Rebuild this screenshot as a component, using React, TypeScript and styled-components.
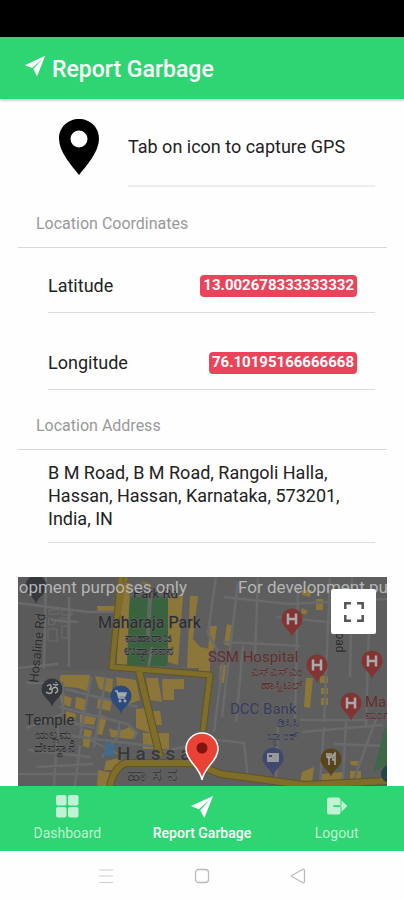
import React from "react";
import styled, { createGlobalStyle } from "styled-components";

const GlobalStyle = createGlobalStyle`
  * { box-sizing: border-box; }
  body {
    margin: 0;
    background: #fefefe;
    color: #222;
    font-family: Roboto, "Noto Sans", sans-serif;
    font-size: 18px;
  }
`;

const Screen = styled.div`
  display: flex;
  flex-direction: column;
  height: 100vh;
`;

const StatusBar = styled.div`
  flex: none;
  height: 37px;
  background: #000;
`;

const Header = styled.header`
  flex: none;
  display: flex;
  align-items: center;
  gap: 6px;
  height: 62px;
  padding: 4px 24px 0;
  background: #2fd572;
  color: #fff;
  box-shadow: 0 1px 3px rgba(0, 0, 0, 0.3);

  svg {
    margin-bottom: 8px;
  }
`;

const Title = styled.h1`
  margin: 0;
  font-size: 23px;
  line-height: 28px;
  font-weight: 500;
`;

const Content = styled.main`
  flex: 1;
  min-height: 0;
  display: flex;
  flex-direction: column;
  padding: 0 17px 0 18px;
  overflow: hidden;
`;

const Capture = styled.div`
  display: flex;
  padding-right: 12px;
  height: 88px;
`;

const CaptureButton = styled.button`
  display: flex;
  justify-content: center;
  width: 110px;
  padding: 20px 0 0 12px;
  border: 0;
  background: none;
  cursor: pointer;
`;

const CaptureLabel = styled.div`
  flex: 1;
  padding-top: 8px;
  line-height: 80px;
  border-bottom: 2px solid #ededed;
`;

const SectionTitle = styled.h2<{ $height: number }>`
  display: flex;
  align-items: flex-end;
  height: ${(p) => p.$height}px;
  margin: 0;
  padding: 0 18px 13px;
  border-bottom: 1px solid #d8d8d8;
  color: #999;
  font-size: 16px;
  line-height: 20px;
  font-weight: 400;
`;

const Row = styled.div<{ $height: number }>`
  display: flex;
  align-items: flex-end;
  justify-content: space-between;
  height: ${(p) => p.$height}px;
  margin: 0 12px 0 30px;
  padding: 0 18px 15px 0;
  border-bottom: 1px solid #dcdcdc;
  line-height: 22px;
`;

const Badge = styled.span`
  padding: 0 3px 2px;
  border-radius: 4px;
  background: #eb445a;
  color: #fff;
  font-size: 15px;
  line-height: 20px;
  font-weight: 700;
`;

const Address = styled.p`
  margin: 0 12px 0 30px;
  padding: 11px 24px 12px 0;
  border-bottom: 1px solid #dcdcdc;
  line-height: 23px;
`;

const MapPanel = styled.section`
  position: relative;
  flex: 1;
  min-height: 0;
  margin-top: 34px;
  overflow: hidden;
  background: #5e5e5e;
`;

const MapDrawing = styled.svg`
  display: block;
  width: 100%;
  height: 100%;
`;

const FullscreenButton = styled.button`
  position: absolute;
  top: 12px;
  right: 11px;
  display: grid;
  place-items: center;
  width: 45px;
  height: 45px;
  padding: 0;
  border: 0;
  border-radius: 2px;
  background: #fff;
  cursor: pointer;
`;

const Tabs = styled.nav`
  flex: none;
  display: grid;
  grid-template-columns: repeat(3, 1fr);
  height: 65px;
  background: #2fd572;
`;

const Tab = styled.a<{ $active?: boolean }>`
  display: flex;
  flex-direction: column;
  align-items: center;
  gap: 5px;
  padding-top: 9px;
  color: ${(p) => (p.$active ? "#fff" : "#bff3d3")};
  font-size: 14px;
  line-height: 18px;
  font-weight: ${(p) => (p.$active ? 500 : 400)};
  text-decoration: none;
  white-space: nowrap;
`;

const SystemBar = styled.div`
  flex: none;
  display: flex;
  justify-content: center;
  align-items: center;
  gap: 80px;
  height: 49px;
`;

const SystemButton = styled.button`
  display: grid;
  width: 16px;
  height: 16px;
  padding: 0;
  border: 0;
  background: none;
`;

const PlaneIcon = ({ size }: { size: number }) => (
  <svg width={size} height={size} viewBox="-1 -1 26 26" fill="currentColor" aria-hidden="true">
    <path d="M24 0 0 11l8.600 3.400L21 3.500 10 15.400 14.500 24Z" />
  </svg>
);

const GridIcon = () => (
  <svg width="24" height="24" viewBox="0 0 24 24" fill="currentColor" aria-hidden="true">
    <rect x="1" y="0" width="10.5" height="10.5" rx="2" />
    <rect x="13" y="0" width="10.5" height="10.5" rx="2" />
    <rect x="1" y="12" width="10.5" height="10.5" rx="2" />
    <rect x="13" y="12" width="10.5" height="10.5" rx="2" />
  </svg>
);

const LogoutIcon = () => (
  <svg width="24" height="24" viewBox="0 0 24 24" aria-hidden="true">
    <path
      fill="currentColor"
      d="M4.500 2.500H13A2.500 2.500 0 0 1 15.500 5V10.300H8.300V11.900H15.500V17A2.500 2.500 0 0 1 13 19.500H4.500A2.500 2.500 0 0 1 2 17V5A2.500 2.500 0 0 1 4.500 2.500Z"
    />
    <path fill="currentColor" d="M16.500 5.500 22.300 11.100 16.500 16.700V11.900H15.500V10.300H16.500Z" />
  </svg>
);

type PinKind = "hospital" | "temple" | "shop" | "bank" | "food" | "plain";

const pinColors: Record<PinKind, string> = {
  hospital: "#813532",
  temple: "#34383d",
  shop: "#2b4a80",
  bank: "#41486f",
  food: "#58451c",
  plain: "#34383d",
};

const Pin = ({ x, y, kind }: { x: number; y: number; kind: PinKind }) => (
  <g transform={`translate(${x} ${y})`}>
    <path
      d="M0 18C-1.500 11-10.500 8-10.500 0A10.500 10.500 0 0 1 10.500 0C10.500 8 1.500 11 0 18Z"
      fill={pinColors[kind]}
    />
    {kind === "hospital" && (
      <path d="M-4-5.500V5.500M4-5.500V5.500M-4 0H4" stroke="#aaa" strokeWidth="2.500" fill="none" />
    )}
    {kind === "temple" && (
      <path
        d="M-5-3Q-1-6-1-2.500-1 0-3 0 1 0 0 3-2 6-6 3M0 0Q3-3 5-1 7 3 3 4M1-5Q4-3 6-5M4-7V-6"
        stroke="#aaa"
        strokeWidth="1.400"
        fill="none"
      />
    )}
    {kind === "shop" && (
      <g fill="none" stroke="#aaa" strokeWidth="1.500">
        <path d="M-6-5H-4L-2 2H4" />
        <path d="M-3-3H5L4 0H-2Z" fill="#aaa" />
        <circle cx="-1" cy="5" r=".7" />
        <circle cx="4" cy="5" r=".7" />
      </g>
    )}
    {kind === "bank" && (
      <g fill="#999">
        <rect x="-6" y="-5" width="12" height="9" rx="1" />
        <path d="M-4-3H-1V-1H-4Z" fill="#41486f" />
      </g>
    )}
    {kind === "food" && (
      <path
        d="M-4-6V-2Q-2 0 0-2V-6M-2-6V6M4 6V-6Q1-4 2 1H4"
        stroke="#aaa"
        strokeWidth="1.500"
        fill="none"
      />
    )}
  </g>
);

const blocks = [
  "M100 6H112L109 89 99 90Z",
  "M79 29H98L97 36H80Z",
  "M150 18H165L160 88 150 85Z",
  "M172 19H180L175 62 182 70 192 72V91H169Z",
  "M42 99H54L53 103 42 104Z",
  "M43 98H72L69 114 60 111 43 109Z",
  "M42 117 54 121 52 130 43 126Z",
  "M58 120 70 123 67 134 57 131Z",
  "M48 134 58 137 57 145 46 142Z",
  "M62 137 78 141 76 148 62 146Z",
  "M77 99 95 102 94 116 81 112Z",
  "M80 122 94 124 92 134 79 131Z",
  "M66 152 74 154 71 171 65 169Z",
  "M82 138 89 140 84 158 78 157Z",
  "M91 151Q100 157 113 149L119 155 114 162 93 160Z",
  "M98 100 118 103 122 123 108 128 100 119Z",
  "M128 101H140L144 125 132 123Z",
  "M118 132 127 131 133 156 118 151Z",
  "M144 102H166V112H156V123H145Z",
  "M134 134 142 134 144 148 137 148Z",
  "M125 156H151V172H125Z",
  "M88 184 105 180 97 193 86 193Z",
  "M80 193 94 196 90 209H79Z",
  "M192 49 199 49 195 76 190 75Z",
  "M209 47 215 49 211 69 206 67Z",
  "M181 87H192V99H181Z",
  "M202 88 208 88 206 106 201 105Z",
  "M284 13 294 13 292 20 284 18Z",
  "M298 22H305V33H298Z",
  "M284 31 290 34 287 38 283 36Z",
  "M288 101H295L292 131 286 130Z",
  "M302 99H310V106H302ZM303 111H310V117H303ZM303 121H310V128H303Z",
  "M284 195 296 190 294 206H282Z",
  "M304 197 324 195 326 204H304Z",
  "M332 184 341 184 339 189 333 188ZM332 194 343 194 343 202 332 202Z",
];

const minorRoads =
  "M0 26 70 35 96 35M28 0 26 92M51 20 51 90M0 91 40 87M33 43 60 45M8 106H45V137L8 151M47 112 120 130M41 130 110 147M73 100 62 160M88 100 76 170M50 145 77 151M39 157 140 170M101 146V158L84 180M72 163 100 177M110 147 119 156 115 162M143 175 185 166M134 70 130 92M198 0 190 56 205 84 196 155M220 5 211 80 204 140M240 0 237 80M258 40 340 48M280 8 277 145M312 0 306 145M334 0 332 100M351 42 348 150M205 65 282 69M225 69 218 145M190 162 226 166 230 202M260 150 258 205M282 143H350M284 155 365 148M306 150 302 205M316 167 369 169M328 145 325 202M358 142 335 205M206 20 270 27 369 22M10 173 72 180M18 190 75 187M62 168 57 209M40 149 36 209M0 197H80";

const MapScene = () => (
  <MapDrawing viewBox="0 0 369 209" preserveAspectRatio="xMidYMin slice" role="img" aria-label="Map of Hassan">
    <rect width="369" height="209" fill="#5e5e5e" />
    <path d="M0 0H98L92 93H0Z" fill="#5a5a5a" />
    <path d="M113 20H155L149 89 99 88Z" fill="#39633f" />
    <path d="M132 20 130 60" stroke="#606960" strokeWidth="4" />
    <path d={blocks.join("")} fill="#8c763a" />
    <path d={minorRoads} fill="none" stroke="#696a6c" strokeWidth="2.500" />
    <path d="M31 33H41V37H31ZM44 33H54V38H44ZM31 41 38 43 36 48 30 47ZM42 41H52V45H42ZM30 52H39V64H30ZM44 49H50V61H44Z" fill="none" stroke="#6d6d6d" />
    <path d="M88 166 97 167 95 179 86 178Z" fill="#406b8b" />
    <path d="M366 153 369 151V188L356 194Z" fill="#3d6747" />
    <g fill="none" strokeLinejoin="round">
      <path d="M103 0 94 90 192 98 185 154" stroke="#5f5424" strokeWidth="7" />
      <path d="M121 94 142 180M92 209Q96 190 108 186H174L203 197 286 208 369 204" stroke="#5f5424" strokeWidth="8" />
      <path d="M103 0 94 90 192 98 185 154" stroke="#7f6e2a" strokeWidth="5" />
      <path d="M121 94 142 180M92 209Q96 190 108 186H174L203 197 286 208 369 204" stroke="#7f6e2a" strokeWidth="6" />
      <path d="M108 0 101 38M124 5 133 9" stroke="#7f6e2a" strokeWidth="3" />
    </g>
    <g fontFamily='Roboto, "Noto Sans", sans-serif' fill="#292b2d" stroke="#666" strokeWidth="1" paintOrder="stroke">
      <text x="115" y="21" fontSize="13">Park Rd</text>
      <text x="80" y="51" fontSize="16">Maharaja Park</text>
      <g textAnchor="middle" fontSize="13">
        <text x="130" y="65">ಮಹಾರಾಜ</text>
        <text x="130" y="78">ಉದ್ಯಾನವನ</text>
        <text x="36" y="162">ಯಲ್ಲಮ್ಮ</text>
        <text x="36" y="175">ದೇವಸ್ಥಾನ</text>
      </g>
      <text x="7" y="148" fontSize="15">Temple</text>
      <text transform="translate(20 106) rotate(-84)" fontSize="13">Hosaline Rd</text>
      <text transform="translate(318 48) rotate(90)" fontSize="12">Road</text>
      <g fill="#38383a" fontWeight="500">
        <text x="99" y="183" fontSize="19" letterSpacing="5">Hassan</text>
        <text x="109" y="204" fontSize="19" letterSpacing="5">ಹಾಸನ</text>
      </g>
      <g fill="#612d2b">
        <text x="190" y="85" fontSize="15">SSM Hospital</text>
        <g textAnchor="end" fontSize="13">
          <text x="285" y="99">ಎಸ್‌ಎಸ್‌ಎಂ</text>
          <text x="285" y="112">ಹಾಸ್ಪಿಟಲ್</text>
        </g>
        <text x="347" y="130" fontSize="15">Mangala</text>
        <text x="347" y="142" fontSize="13">ಮಂಗಳ</text>
      </g>
      <g fill="#343a5c">
        <text x="212" y="137" fontSize="15">DCC Bank</text>
        <g textAnchor="end" fontSize="13">
          <text x="281" y="150">ಡಿಸಿಸಿ</text>
          <text x="281" y="163">ಬ್ಯಾಂಕ್</text>
        </g>
      </g>
    </g>
    <Pin x={18} y={9} kind="plain" />
    <Pin x={34} y={112} kind="temple" />
    <Pin x={103} y={119} kind="shop" />
    <Pin x={274} y={42} kind="hospital" />
    <Pin x={299} y={88} kind="hospital" />
    <Pin x={354} y={84} kind="hospital" />
    <Pin x={333} y={126} kind="hospital" />
    <Pin x={255} y={181} kind="bank" />
    <Pin x={313} y={182} kind="food" />
    <circle cx="372" cy="197" r="9" fill="#234749" />
    <g fontFamily="Roboto, sans-serif" fontSize="17" fill="#b5b5b5">
      <text x="169" y="16" textAnchor="end">For development purposes only</text>
      <text x="220" y="16">For development purposes only</text>
    </g>
    <path
      d="M184 203C182 190 168 184 168 172A16 16 0 0 1 200 172C200 184 186 190 184 203Z"
      fill="#ea4335"
      stroke="#fff"
      strokeWidth="1.500"
    />
    <circle cx="184" cy="171" r="5.500" fill="#811411" />
  </MapDrawing>
);

export default function App() {
  return (
    <>
      <GlobalStyle />
      <Screen>
        <StatusBar />
        <Header>
          <PlaneIcon size={22} />
          <Title>Report Garbage</Title>
        </Header>
        <Content>
          <Capture>
            <CaptureButton aria-label="Capture GPS">
              <svg width="40" height="56" viewBox="0 0 40 56" aria-hidden="true">
                <path
                  fillRule="evenodd"
                  d="M20 0C9 0 0 8 0 19.500 0 33 12 46 20 56 28 46 40 33 40 19.500 40 8 31 0 20 0Zm0 11.500a8.500 8.500 0 1 1 0 17 8.500 8.500 0 0 1 0-17Z"
                />
              </svg>
            </CaptureButton>
            <CaptureLabel>Tab on icon to capture GPS</CaptureLabel>
          </Capture>
          <SectionTitle $height={61}>Location Coordinates</SectionTitle>
          <Row $height={65}>
            <span>Latitude</span>
            <Badge>13.002678333333332</Badge>
          </Row>
          <Row $height={77}>
            <span>Longitude</span>
            <Badge>76.10195166666668</Badge>
          </Row>
          <SectionTitle $height={60}>Location Address</SectionTitle>
          <Address>B M Road, B M Road, Rangoli Halla, Hassan, Hassan, Karnataka, 573201, India, IN</Address>
          <MapPanel>
            <MapScene />
            <FullscreenButton aria-label="Toggle fullscreen view">
              <svg width="20" height="20" viewBox="0 0 20 20" fill="none" stroke="#555" strokeWidth="2.500" aria-hidden="true">
                <path d="M1.300 7V1.300H7M13 1.300H18.700V7M18.700 13V18.700H13M7 18.700H1.300V13" />
              </svg>
            </FullscreenButton>
          </MapPanel>
        </Content>
        <Tabs>
          <Tab href="#dashboard">
            <GridIcon />
            Dashboard
          </Tab>
          <Tab href="#report" $active aria-current="page">
            <PlaneIcon size={24} />
            Report Garbage
          </Tab>
          <Tab href="#logout">
            <LogoutIcon />
            Logout
          </Tab>
        </Tabs>
        <SystemBar>
          <SystemButton aria-label="Recent apps">
            <svg width="16" height="16" viewBox="0 0 16 16" stroke="#ccc" strokeWidth="1.200">
              <path d="M1 2H15M1 8H15M1 14.500H15" />
            </svg>
          </SystemButton>
          <SystemButton aria-label="Home">
            <svg width="16" height="16" viewBox="0 0 16 16" fill="none" stroke="#bbb" strokeWidth="1.300">
              <rect x="1.500" y="1.500" width="13" height="13" rx="3" />
            </svg>
          </SystemButton>
          <SystemButton aria-label="Back">
            <svg width="16" height="16" viewBox="0 0 16 16" fill="none" stroke="#bbb" strokeWidth="1.300" strokeLinejoin="round">
              <path d="M1 8 12.500 1.500Q14.500 1 14.500 3V13Q14.500 15 12.500 14.500Z" />
            </svg>
          </SystemButton>
        </SystemBar>
      </Screen>
    </>
  );
}
